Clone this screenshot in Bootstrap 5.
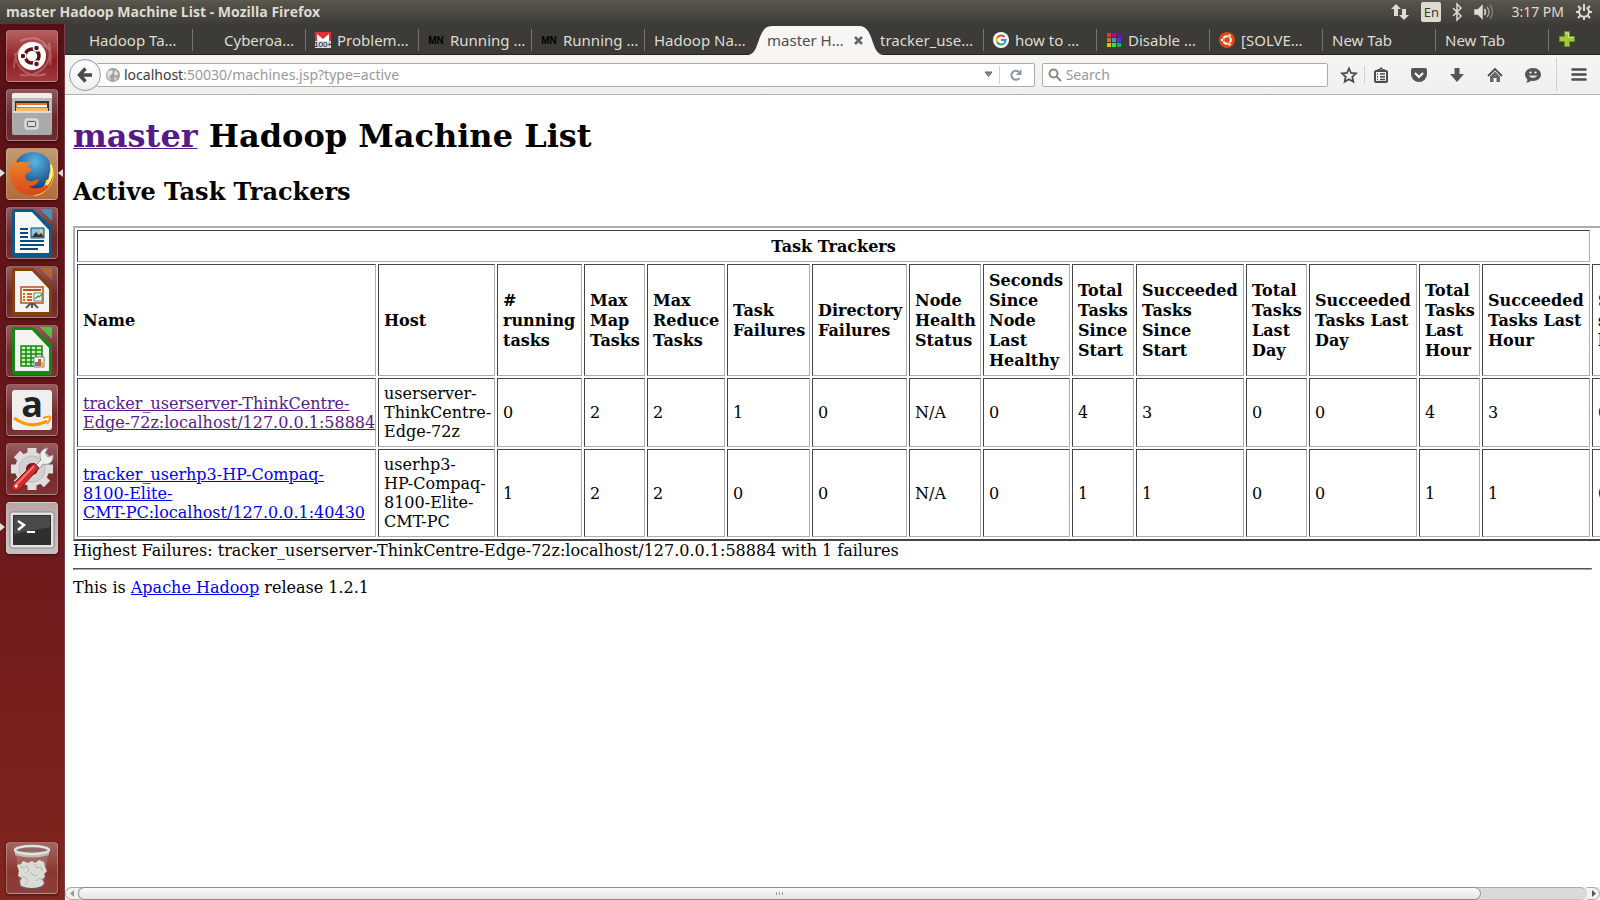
<!DOCTYPE html>
<html lang="en">
<head>
<meta charset="utf-8">
<meta name="viewport" content="width=device-width, initial-scale=1">
<title>master Hadoop Machine List</title>
<link href="https://cdn.jsdelivr.net/npm/bootstrap@5.3.0/dist/css/bootstrap.min.css" rel="stylesheet">
<script src="https://cdn.jsdelivr.net/npm/bootstrap@5.3.0/dist/js/bootstrap.bundle.min.js" defer></script>
<style>
  body { font-family: "Noto Sans", "Open Sans", sans-serif; font-size: 14px; line-height: 20px; color: #dfdbd2; }
  svg { display: block; flex: none; overflow: visible; }
  button { border: 0; background: none; padding: 0; color: inherit; display: block; }

  /* top panel */
  .panel { height: 24px; padding: 0 8px 0 6px; background: linear-gradient(#5e5b4e 0, #56534b 2px, #3e3d38 100%); }
  .panel-title { font: 700 14px/24px "Open Sans", sans-serif; }
  .indicators { gap: 12px; }
  .lang { width: 20px; height: 20px; border-radius: 2px; background: #dfdbd2; color: #3c3b37; line-height: 20px; font-size: 13px; text-align: center; }

  /* launcher */
  .dock { width: 65px; padding: 6px 7px 6px 6px; background: linear-gradient(#581016, #6e1a1c 60%, #80261f); border-right: 1px solid #7a4043; }
  .dock-list { gap: 7px; }
  .tile { width: 52px; height: 52px; border-radius: 4px; border: 1px solid rgba(255,255,255,.25); background: linear-gradient(rgba(255,255,255,.3), rgba(255,255,255,.08) 60%, rgba(255,255,255,.12)); box-shadow: 0 1px 3px rgba(0,0,0,.5); }
  .tile-home { background: linear-gradient(#b5605f, #8e1d22 60%, #a03a3c); }
  .tile-fox { background: linear-gradient(#c39a74, #b26b38); }
  .tile-term { background: linear-gradient(#b9a5a8, #c9bfc0); }
  .pip { position: absolute; top: 21px; width: 0; height: 0; border: 4px solid transparent; }
  .pip-l { left: -6px; border-left: 5px solid #ddd; border-right: 0; }
  .pip-r { right: -6px; border-right: 5px solid #ddd; border-left: 0; }

  /* tab strip */
  .body-row, .content { min-height: 0; min-width: 0; }
  .strip { height: 31px; padding-left: 15px; background: #3c3b37; border-bottom: 1px solid #272623; }
  .tab { flex: 0 1 113px; min-width: 0; height: 30px; padding: 2px 0 0 9px; gap: 6px; font-size: 15px; color: #dfdbd2; text-decoration: none; white-space: nowrap; position: relative; }
  .tab.sep::after { content: ""; position: absolute; right: 0; top: 5px; width: 1px; height: 22px; background: #77756f; }
  .tab-on { color: #4c4c4c; z-index: 1; }
  .tab-shape { position: absolute; left: -11px; top: 2px; z-index: -1; }
  .newtab { margin-left: 10px; }

  /* navigation bar */
  .navrow { height: 40px; background: linear-gradient(#f6f5f4, #f0efed); border-bottom: 1px solid #b2aea8; padding: 0 13px 0 4px; color: #555; }
  .back { width: 32px; height: 32px; border: 1px solid #8f9aa8; border-radius: 50%; background: linear-gradient(#fefefe, #eef0f2); z-index: 1; margin-right: -5px; }
  .field { height: 24px; border: 1px solid #aeaaa4; border-radius: 2px; background: #fff; }
  .addr { flex: 943 1 0; padding-left: 9px; }
  .find { flex: 284 1 0; margin-left: 7px; padding-left: 5px; }
  .field input { border: 0; outline: 0; background: none; padding: 0; font-size: 14px; color: #555; }
  .field input::placeholder { color: #999; opacity: 1; }
  .url-text { color: #999; white-space: nowrap; }
  .url-text b { color: #3a3a3a; font-weight: 400; }
  .vline { width: 1px; background: #d3d1ce; }
  .vline-s { height: 18px; }
  .vline-menu { margin: 3px 14px 3px 15px; }
  .reload { padding: 0 12px 0 10px; }
  .drop { margin-right: 6px; }
  .marks { gap: 7px; margin-left: 13px; }
  .tools { gap: 22px; margin-left: 8px; }

  /* document */
  .doc { background: #fff; color: #000; font: 16px/19px "DejaVu Serif", serif; padding: 22px 8px 0; overflow: hidden; }
  .doc a { color: #00e; text-decoration: underline; text-decoration-thickness: 1px; }
  .doc a.seen { color: #551a8b; }
  .doc h1 { font-size: 32px; line-height: 38px; font-weight: 700; margin: 0 0 22px; }
  .doc h2 { font-size: 24px; line-height: 29px; font-weight: 700; margin: 0 0 20px; }
  .grid-old { table-layout: fixed; width: 1624px; border: 2px solid; border-color: #aeaeae #454545 #454545 #aeaeae; border-collapse: separate; border-spacing: 2px; }
  .grid-old th, .grid-old td { border: 1px solid; border-color: #454545 #aeaeae #aeaeae #454545; padding: 5px; white-space: nowrap; vertical-align: middle; }
  .grid-old th { line-height: 20px; padding: 6px 5px 4px; }
  .rule { margin: 8px 0; height: 2px; border: 1px solid; border-color: #555 #aaa #aaa #555; opacity: 1; }

  /* horizontal scroll bar */
  .hbar { height: 13px; background: #f2f1f0; }
  .hbar-end { width: 13px; height: 13px; border: 1px solid #aaa; }
  .hbar-track { background: #dcdad8; border-top: 1px solid #aaa; border-bottom: 1px solid #c4c2c0; border-radius: 0 7px 7px 0; }
  .hbar-thumb { width: 93%; height: 13px; margin-top: -1px; border: 1px solid #8e8c89; border-radius: 7px; background: linear-gradient(#fbfbfb, #e6e4e2); }
</style>
</head>
<body>
<div class="vh-100 d-flex flex-column overflow-hidden">

  <header class="panel d-flex align-items-center flex-shrink-0">
    <div class="panel-title flex-grow-1">master Hadoop Machine List - Mozilla Firefox</div>
    <div class="indicators d-flex align-items-center">
      <svg width="18" height="18" viewBox="0 0 18 18" fill="#dfdbd2"><path d="M5 1l5 5H7v7H3V6H0zM13 17l-5-5h3V6h4v6h3z"/></svg>
      <div class="lang">En</div>
      <svg width="8" height="18" viewBox="0 0 8 18" fill="none" stroke="#dfdbd2" stroke-width="1.500"><path d="M0 5l8 8-4 4V1l4 4-8 8"/></svg>
      <svg width="22" height="18" viewBox="0 0 22 18" fill="none" stroke="#dfdbd2" stroke-width="1.500"><path d="M2 7h3l4-4v12l-4-4H2z" fill="#dfdbd2"/><path d="M11.500 6q2 3 0 6"/><path d="M14 4q4 5 0 10" opacity=".6"/><path d="M17 2q5 7 0 14" opacity=".35"/></svg>
      <span class="ms-1">3:17 PM</span>
      <svg width="16" height="18" viewBox="0 0 16 18" fill="none" stroke="#dfdbd2" stroke-width="2"><path d="M5.500 4.500a5 5 0 1 0 5 0M8 1v7"/><path d="M3.800 4.800L2 3M12.200 4.800L14 3M3 9H0M13 9h3M4.300 12.700L2 15M11.700 12.700L14 15M8 14v3"/></svg>
    </div>
  </header>

  <div class="body-row d-flex flex-grow-1">
    <nav class="dock d-flex flex-column justify-content-between flex-shrink-0" aria-label="Launcher">
      <div class="dock-list d-flex flex-column">
        <button class="tile tile-home" aria-label="Dash"><svg width="50" height="50" viewBox="0 0 50 50"><path d="M7 37C8 12 27 4 44 20M42 12c5 20-9 35-29 32M13 10C32 2 47 14 43 34M8 22c1 17 15 26 31 21" fill="none" stroke="#fff" stroke-width="2" opacity=".25"/><circle cx="25" cy="25" r="14" fill="#fff"/><circle cx="25" cy="25" r="7" fill="none" stroke="#5e1216" stroke-width="3.500"/><g stroke="#fff" stroke-width="1.500" fill="#5e1216"><circle cx="16" cy="25" r="3"/><circle cx="29.500" cy="17" r="3"/><circle cx="29.500" cy="33" r="3"/></g></svg></button>
        <button class="tile" aria-label="Files"><svg width="50" height="50" viewBox="0 0 50 50"><path d="M5 5q0-2 2-2h36q2 0 2 2v37H5z" fill="#bbb"/><path d="M5 5q0-2 2-2h36q2 0 2 2v3H5z" fill="#eee"/><path d="M8 11h34v10H8z" fill="#333"/><path d="M9 13h31v8H9z" fill="#dd7a2b"/><path d="M10 15h30v2H10z" fill="#fff"/><path d="M9 18h32v3H9z" fill="#f4b872"/><path d="M6 21h38l1 22q0 2-2 2H7q-2 0-2-2z" fill="#aaa"/><path d="M6 21h38v2H6z" fill="#ddd"/><rect x="18" y="29" width="13" height="10" rx="2" fill="#ccc" stroke="#eee"/><rect x="20.500" y="31.500" width="8" height="5" rx="1" fill="#ddd" stroke="#555"/></svg></button>
        <div class="position-relative">
          <button class="tile tile-fox" aria-label="Firefox"><svg width="50" height="50" viewBox="0 0 50 50"><defs><radialGradient id="gl" cx=".55" cy=".25" r=".7"><stop offset="0" stop-color="#56b7e8"/><stop offset="1" stop-color="#123a75"/></radialGradient><linearGradient id="fx" x2="0" y2="1"><stop offset="0" stop-color="#f08a25"/><stop offset="1" stop-color="#d8461a"/></linearGradient></defs><circle cx="26" cy="23" r="20" fill="url(#gl)"/><path d="M42 11c6 9 6 19 1 26-4 6-10 10-17 10 8-4 12-9 13-16 2 0 3-2 3-5 2-5 2-10 0-15z" fill="#ffd93b"/><path d="M46 26c-1 13-10 20-21 20C12 46 3 37 3 25c0-6 2-11 6-15l1 4c3-2 6-2 9 0l5-2c-1 3-2 4-4 6l5 2c-1 3-4 3-6 5-2 3 0 6 3 7 4 1 6-2 10-1-2 5-6 7-11 6 8 5 21 2 25-11z" fill="url(#fx)"/><path d="M44 16c2 7 0 15-4 20" fill="none" stroke="#fff29a" stroke-width="2"/></svg></button>
          <i class="pip pip-l"></i><i class="pip pip-r"></i>
        </div>
        <button class="tile" aria-label="Writer"><svg width="50" height="50" viewBox="0 0 50 50"><path d="M5 4q0-3 3-3h18l19 18v27q0 3-3 3H8q-3 0-3-3z" fill="#0c5a8a"/><path d="M33 1h12v12z" fill="#3e93c4"/><path d="M8 4h17l17 18v23H8z" fill="#f7f7f7"/><path d="M13 21h8M13 25h8M13 29h8M13 33h24M13 37h24M13 41h18" stroke="#0c4a78" stroke-width="2"/><path d="M24 20h13v10H24z" fill="#8cc5ea" stroke="#0c4a78"/><path d="M25 29l4-5 3 3 2-2 3 4z" fill="#333"/><circle cx="34" cy="23" r="1.500" fill="#fd0"/></svg></button>
        <button class="tile" aria-label="Impress"><svg width="50" height="50" viewBox="0 0 50 50"><path d="M5 4q0-3 3-3h18l19 18v27q0 3-3 3H8q-3 0-3-3z" fill="#85400e"/><path d="M33 1h12v12z" fill="#b9652e"/><path d="M8 4h17l17 18v23H8z" fill="#f3f3f3"/><path d="M14 20h22v16H14z" fill="#fff0e2" stroke="#b4541b" stroke-width="1.500"/><path d="M16 23h18" stroke="#b4541b" stroke-width="2"/><path d="M16 27h2M16 30h2M16 33h2M20 27h5M20 30h5M20 33h5" stroke="#c8703a" stroke-width="2"/><path d="M27 26h8v8h-8z" fill="#fff" stroke="#777"/><path d="M28 32l3-3 1 1 3-3" stroke="#3a4" stroke-width="1.500" fill="none"/><path d="M19 41l4-4h4l4 4M25 37v4" stroke="#555" stroke-width="2" fill="none"/></svg></button>
        <button class="tile" aria-label="Calc"><svg width="50" height="50" viewBox="0 0 50 50"><path d="M5 4q0-3 3-3h18l19 18v27q0 3-3 3H8q-3 0-3-3z" fill="#17870f"/><path d="M33 1h12v12z" fill="#54bd43"/><path d="M8 4h17l17 18v23H8z" fill="#f3f3f3"/><path d="M14 20h21v20H14z" fill="#c8f0b8"/><path d="M14 20h21v20H14zM14 24h21M14 28h21M14 32h21M14 36h21M19 20v20M24 20v20M29 20v20" fill="none" stroke="#17870f" stroke-width="1.500"/><path d="M27 31h10v10H27z" fill="#fff" stroke="#777"/><path d="M28 36h3v4h-3z" fill="#2b8fd0"/><path d="M31 33h3v7h-3z" fill="#d2592a"/><path d="M34 36h2v4h-2z" fill="#eb2"/></svg></button>
        <button class="tile" aria-label="Amazon"><svg width="50" height="50" viewBox="0 0 50 50"><rect x="5" y="5" width="40" height="40" rx="3" fill="#efefef"/><text x="25" y="32" text-anchor="middle" font-family="Open Sans" font-weight="700" font-size="36" fill="#222">a</text><path d="M7 33q17 12 33 3" fill="none" stroke="#f90" stroke-width="3"/><path d="M36 33q8-3 7 0 0 3-3 6" fill="none" stroke="#f90" stroke-width="2"/></svg></button>
        <button class="tile" aria-label="System Settings"><svg width="50" height="50" viewBox="0 0 50 50"><g stroke="#ddd" stroke-width="9"><path d="M25 4v42M4 25h42M10 10l30 30M40 10L10 40"/></g><circle cx="25" cy="25" r="17" fill="#ddd"/><circle cx="25" cy="25" r="13" fill="#d2d2d2" stroke="#bbb"/><circle cx="25" cy="25" r="6" fill="#6b1a1e"/><path d="M28 22l6-6c-3-6 1-12 7-12l-3 5 3 4 5-2c1 6-4 11-10 9l-5 6z" fill="#eee" stroke="#999"/><path d="M6 40L27 19l5 5-19 21c-5 4-11 0-7-5z" fill="#d02c2c" stroke="#8d1414"/><path d="M9 41l18-19" stroke="#f07a70" stroke-width="2"/><circle cx="9" cy="42" r="1.500" fill="#fff"/></svg></button>
        <div class="position-relative">
          <button class="tile tile-term" aria-label="Terminal"><svg width="50" height="50" viewBox="0 0 50 50"><rect x="3" y="9" width="44" height="36" rx="2" fill="#e3e3e3" stroke="#888"/><rect x="6" y="12" width="38" height="30" fill="#2f2f2f"/><path d="M7 13h36v11L7 31z" fill="#4a4a4a"/><path d="M11 18l6 4-6 5" fill="none" stroke="#fff" stroke-width="2.500"/><path d="M20 29h8" stroke="#fff" stroke-width="2"/></svg></button>
          <i class="pip pip-l"></i>
        </div>
      </div>
      <button class="tile" aria-label="Trash"><svg width="50" height="50" viewBox="0 0 50 50"><path d="M9 11l4 33q12 5 24 0l4-33z" fill="#fff" opacity=".15"/><path d="M13 42q12 7 24 0v2q-12 6-24 0z" fill="#556"/><path d="M10 22l4-1 2-3 5 2 4-2 3 2 4-3 5 2 1 5 2 4-3 3 1 3-3 2 2 4-2 3q-10 4-21 0l-1-5 2-3-4-2 1-5z" fill="#dcdcd7"/><path d="M13 23l4 2 3-2 2 4-3 3M28 21l2 4 4-1 1 4M15 33l4 2 2 4M24 29l3 4 4-1M29 38l3-3 3 2M18 42l2-3" fill="none" stroke="#b4b6b0"/><path d="M8 7v5q17 5 34 0V7z" fill="#b9bcb6"/><ellipse cx="25" cy="7" rx="17" ry="4" fill="#8f6a66" stroke="#e2e2dd" stroke-width="2.500"/></svg></button>
    </nav>

    <main class="content d-flex flex-column flex-grow-1">
      <div class="strip d-flex align-items-center flex-shrink-0">
        <a href="#" class="tab sep d-flex align-items-center">Hadoop Ta…</a>
        <a href="#" class="tab sep d-flex align-items-center"><svg width="16" height="16"></svg>Cyberoa…</a>
        <a href="#" class="tab sep d-flex align-items-center"><svg width="16" height="16" viewBox="0 0 16 16"><path d="M0 0h16v16H0z" fill="#d33"/><path d="M2 2l6 5 6-5v8H2z" fill="#fff"/><path d="M0 9h16v7H0z" fill="#ddd"/><text x="8" y="15" text-anchor="middle" font-size="8" font-family="Liberation Sans" fill="#000">100+</text></svg>Problem…</a>
        <a href="#" class="tab sep d-flex align-items-center"><svg width="16" height="16" viewBox="0 0 16 16"><text x="8" y="12" text-anchor="middle" font-size="10" font-weight="700" font-family="Liberation Sans">MN</text></svg>Running …</a>
        <a href="#" class="tab sep d-flex align-items-center"><svg width="16" height="16" viewBox="0 0 16 16"><text x="8" y="12" text-anchor="middle" font-size="10" font-weight="700" font-family="Liberation Sans">MN</text></svg>Running …</a>
        <a href="#" class="tab d-flex align-items-center">Hadoop Na…</a>
        <a href="#" class="tab tab-on d-flex align-items-center"><svg class="tab-shape" width="137" height="29" viewBox="0 0 137 29"><path d="M0 29C14 29 9 0 25 0h87c16 0 11 29 25 29z" fill="#f7f6f5"/></svg>master H…<svg width="9" height="9" viewBox="0 0 9 9" stroke="#666" stroke-width="2.500" class="ms-1"><path d="M1 1l7 7M8 1L1 8"/></svg></a>
        <a href="#" class="tab sep d-flex align-items-center">tracker_use…</a>
        <a href="#" class="tab sep d-flex align-items-center"><svg width="16" height="16" viewBox="0 0 16 16" fill="none" stroke-width="2"><circle cx="8" cy="8" r="8" fill="#fff"/><path d="M11.500 5A4.600 4.600 0 0 0 4 6" stroke="#ea4335"/><path d="M4 6a4.600 4.600 0 0 0 0 4" stroke="#fbbc05"/><path d="M4 10a4.600 4.600 0 0 0 7 1.500" stroke="#34a853"/><path d="M11 11.500A4.600 4.600 0 0 0 12.600 8H8" stroke="#4285f4"/></svg>how to …</a>
        <a href="#" class="tab sep d-flex align-items-center"><svg width="16" height="16" viewBox="0 0 16 16"><path d="M1 1h4v4H1z" fill="#e0373e"/><path d="M6 1h4v4H6z" fill="#c6007e"/><path d="M11 1h4v4h-4z" fill="#7209c8"/><path d="M1 6h4v4H1z" fill="#d17a00"/><path d="M6 6h4v4H6z" fill="#2aa0e0"/><path d="M11 6h4v4h-4z" fill="#4a3be0"/><path d="M1 11h4v4H1z" fill="#fdbb00"/><path d="M6 11h4v4H6z" fill="#3be03b"/><path d="M11 11h4v4h-4z" fill="#07b56a"/></svg>Disable …</a>
        <a href="#" class="tab sep d-flex align-items-center"><svg width="16" height="16" viewBox="0 0 16 16"><circle cx="8" cy="8" r="8" fill="#dd4814"/><circle cx="8" cy="8" r="3.800" fill="none" stroke="#fff" stroke-width="2"/><g fill="#fff" stroke="#dd4814" stroke-width=".8"><circle cx="3" cy="8" r="1.700"/><circle cx="10.500" cy="3.700" r="1.700"/><circle cx="10.500" cy="12.300" r="1.700"/></g></svg>[SOLVE…</a>
        <a href="#" class="tab sep d-flex align-items-center">New Tab</a>
        <a href="#" class="tab sep d-flex align-items-center">New Tab</a>
        <button class="newtab" aria-label="Open a new tab"><svg width="16" height="16" viewBox="0 0 16 16"><path d="M5.500.5h5v5h5v5h-5v5h-5v-5h-5v-5h5z" fill="#a3c93a" stroke="#6c9023"/><path d="M6.500 2h3v4.500H14" fill="none" stroke="#d3e892"/></svg></button>
      </div>

      <div class="navrow d-flex align-items-center flex-shrink-0">
        <button class="back d-flex align-items-center justify-content-center flex-shrink-0" aria-label="Back"><svg width="16" height="16" viewBox="0 0 16 16" fill="none" stroke="#4c4c4c" stroke-width="3.500"><path d="M8.500 1.500L2.500 8l6 6.500M3 8h12"/></svg></button>
        <div class="field addr d-flex align-items-center">
          <svg width="14" height="14" viewBox="0 0 14 14"><circle cx="7" cy="7" r="7" fill="#a2a2a2"/><path d="M2 3l4-1 1 2-2 3-2 1 2 3-1 1-3-4zM9 2l3 3-1 3-3-2zM8 9l3 1-2 3z" fill="#e6e6e6"/></svg>
          <div class="url-text flex-grow-1 ms-1" role="textbox" aria-label="Address"><b>localhost</b>:50030/machines.jsp?type=active</div>
          <svg width="9" height="7" viewBox="0 0 9 7" class="drop"><path d="M1 1h7L4.500 5.500z" fill="#888" stroke="#666"/></svg>
          <div class="vline vline-s"></div>
          <button class="reload" aria-label="Reload"><svg width="12" height="12" viewBox="0 0 12 12"><path d="M9.500 9A4.500 4.500 0 1 1 9 3" fill="none" stroke="#8996a4" stroke-width="2"/><path d="M11.500 0v6H6z" fill="#8996a4"/></svg></button>
        </div>
        <div class="field find d-flex align-items-center">
          <svg width="14" height="14" viewBox="0 0 14 14" fill="none" stroke="#888" stroke-width="2"><circle cx="5.500" cy="5.500" r="4"/><path d="M8.500 8.500L13 13"/></svg>
          <input class="flex-grow-1 ms-1" type="text" placeholder="Search" aria-label="Search">
        </div>
        <div class="marks d-flex align-items-center">
          <button aria-label="Bookmark"><svg width="16" height="16" viewBox="0 0 16 16" fill="none" stroke="#4c4c4c" stroke-width="1.800"><path d="M8 1.500l2 4.500 5 .5-3.700 3.300 1 5L8 12.300l-4.300 2.500 1-5L1 6.500 6 6z"/></svg></button>
          <span class="vline vline-s"></span>
        </div>
        <div class="tools d-flex align-items-center">
          <button aria-label="Bookmarks list"><svg width="16" height="16" viewBox="0 0 16 16" fill="none" stroke="#4c4c4c" stroke-width="2"><rect x="2" y="4" width="12" height="11" rx="1"/><path d="M4 3h2l2-2 2 2h2M4 7h1M7 7h5M4 9.700h1M7 9.700h5M4 12.400h1M7 12.400h5" stroke-width="1.500"/></svg></button>
          <button aria-label="Pocket"><svg width="16" height="16" viewBox="0 0 16 16"><path d="M2 1h12q2 0 2 2v4a8 8 0 0 1-16 0V3q0-2 2-2z" fill="#555"/><path d="M4 6l4 4 4-4" fill="none" stroke="#fff" stroke-width="2"/></svg></button>
          <button aria-label="Downloads"><svg width="16" height="16" viewBox="0 0 16 16"><path d="M5.500 1h5v6H15l-7 8-7-8h4.500z" fill="#555"/></svg></button>
          <button aria-label="Home"><svg width="16" height="16" viewBox="0 0 16 16"><path d="M1 9l7-7 7 7" fill="none" stroke="#4c4c4c" stroke-width="1.800"/><path d="M3 9.500l5-5 5 5V15H9.500v-4h-3v4H3z" fill="#666"/></svg></button>
          <button aria-label="Hello"><svg width="16" height="16" viewBox="0 0 16 16"><path d="M8 1c5 0 8 3 8 6.500S13 14 8 14l-2-.2Q4 16 1 15.500q2-1.500 1.200-3.200Q0 10.500 0 7.500C0 4 3 1 8 1z" fill="#555"/><circle cx="5.500" cy="5.500" r="1.100" fill="#fff"/><circle cx="10.500" cy="5.500" r="1.100" fill="#fff"/><path d="M3.500 8.500q4.500 5 9 0z" fill="#ddd"/></svg></button>
        </div>
        <div class="vline vline-menu align-self-stretch"></div>
        <button aria-label="Menu"><svg width="16" height="14" viewBox="0 0 16 14" stroke="#4c4c4c" stroke-width="2.500" stroke-linecap="round"><path d="M1.500 1.500h13M1.500 6.500h13M1.500 11.500h13"/></svg></button>
      </div>

      <article class="doc flex-grow-1">
        <h1><a href="#" class="seen">master</a> Hadoop Machine List</h1>
        <h2>Active Task Trackers</h2>
        <table class="grid-old">
          <colgroup><col style="width:299px"><col style="width:117px"><col style="width:85px"><col style="width:61px"><col style="width:78px"><col style="width:83px"><col style="width:95px"><col style="width:72px"><col style="width:87px"><col style="width:62px"><col style="width:108px"><col style="width:61px"><col style="width:108px"><col style="width:61px"><col style="width:108px"><col></colgroup>
          <tbody>
            <tr><th colspan="15" class="text-center">Task Trackers</th></tr>
            <tr><th>Name</th><th>Host</th><th>#<br>running<br>tasks</th><th>Max<br>Map<br>Tasks</th><th>Max<br>Reduce<br>Tasks</th><th>Task<br>Failures</th><th>Directory<br>Failures</th><th>Node<br>Health<br>Status</th><th>Seconds<br>Since<br>Node<br>Last<br>Healthy</th><th>Total<br>Tasks<br>Since<br>Start</th><th>Succeeded<br>Tasks<br>Since<br>Start</th><th>Total<br>Tasks<br>Last<br>Day</th><th>Succeeded<br>Tasks Last<br>Day</th><th>Total<br>Tasks<br>Last<br>Hour</th><th>Succeeded<br>Tasks Last<br>Hour</th><th>Seconds<br>since<br>heartbeat</th></tr>
            <tr><td><a href="#" class="seen">tracker_userserver-ThinkCentre-<br>Edge-72z:localhost/127.0.0.1:58884</a></td><td>userserver-<br>ThinkCentre-<br>Edge-72z</td><td>0</td><td>2</td><td>2</td><td>1</td><td>0</td><td>N/A</td><td>0</td><td>4</td><td>3</td><td>0</td><td>0</td><td>4</td><td>3</td><td>0</td></tr>
            <tr><td><a href="#">tracker_userhp3-HP-Compaq-<br>8100-Elite-<br>CMT-PC:localhost/127.0.0.1:40430</a></td><td>userhp3-<br>HP-Compaq-<br>8100-Elite-<br>CMT-PC</td><td>1</td><td>2</td><td>2</td><td>0</td><td>0</td><td>N/A</td><td>0</td><td>1</td><td>1</td><td>0</td><td>0</td><td>1</td><td>1</td><td>0</td></tr>
          </tbody>
        </table>
        <div>Highest Failures: tracker_userserver-ThinkCentre-Edge-72z:localhost/127.0.0.1:58884 with 1 failures</div>
        <hr class="rule">
        <div>This is <a href="#">Apache Hadoop</a> release 1.2.1</div>
      </article>

      <div class="hbar d-flex flex-shrink-0">
        <button class="hbar-end rounded-start-pill border-end-0 d-flex align-items-center justify-content-center" aria-label="Scroll left"><svg width="5" height="7" viewBox="0 0 5 7"><path d="M4 0v7L0 3.500z" fill="#999"/></svg></button>
        <div class="hbar-track flex-grow-1"><div class="hbar-thumb d-flex align-items-center justify-content-center"><svg width="8" height="3" stroke="#999"><path d="M.5 0v3M3.500 0v3M6.500 0v3"/></svg></div></div>
        <button class="hbar-end rounded-end-pill border-start-0 d-flex align-items-center justify-content-center" aria-label="Scroll right"><svg width="5" height="7" viewBox="0 0 5 7"><path d="M1 0v7l4-3.500z" fill="#555"/></svg></button>
      </div>
    </main>
  </div>
</div>
</body>
</html>
